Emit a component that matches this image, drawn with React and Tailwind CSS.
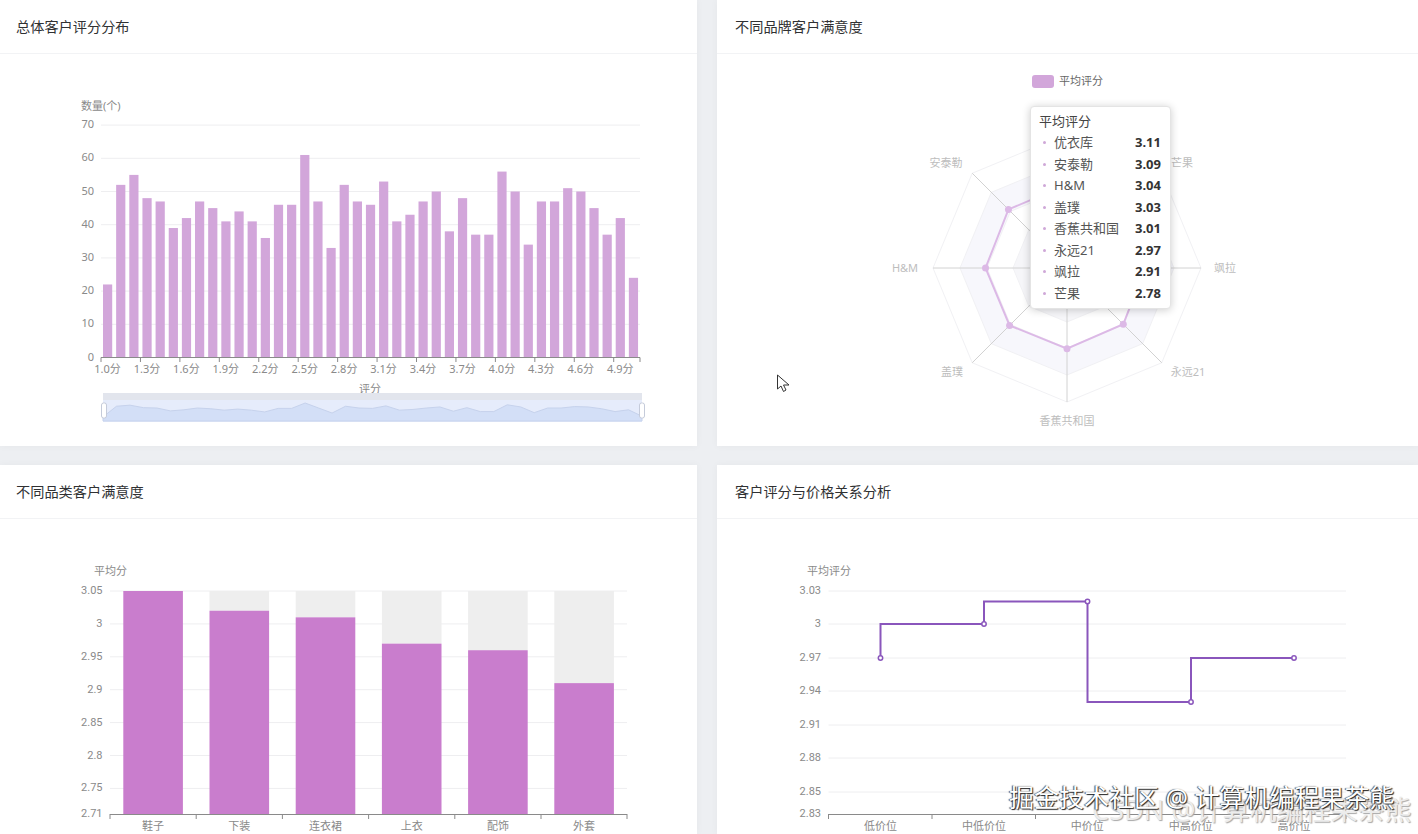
import React from "react";

const scores = [22, 52, 55, 48, 47, 39, 42, 47, 45, 41, 44, 41, 36, 46, 46, 61, 47, 33, 52, 47, 46, 53, 41, 43, 47, 50, 38, 48, 37, 37, 56, 50, 34, 47, 47, 51, 50, 45, 37, 42, 24];
const scoreLabels = ["1.0分", "1.3分", "1.6分", "1.9分", "2.2分", "2.5分", "2.8分", "3.1分", "3.4分", "3.7分", "4.0分", "4.3分", "4.6分", "4.9分"];

const brands = [
  { name: "优衣库", value: 3.11, label: null },
  { name: "安泰勒", value: 3.09, label: [946, 163] },
  { name: "H&M", value: 3.04, label: [905, 268] },
  { name: "盖璞", value: 3.03, label: [952, 372] },
  { name: "香蕉共和国", value: 3.01, label: [1067, 421] },
  { name: "永远21", value: 2.97, label: [1188, 372] },
  { name: "飒拉", value: 2.91, label: [1225, 268] },
  { name: "芒果", value: 2.78, label: [1182, 163] },
];

const categories = [
  { name: "鞋子", value: 3.05 },
  { name: "下装", value: 3.02 },
  { name: "连衣裙", value: 3.01 },
  { name: "上衣", value: 2.97 },
  { name: "配饰", value: 2.96 },
  { name: "外套", value: 2.91 },
];

const priceTicks = [
  ["3.03", 591],
  ["3", 624],
  ["2.97", 658],
  ["2.94", 691],
  ["2.91", 725],
  ["2.88", 758],
  ["2.85", 792],
  ["2.83", 814],
];
const pricePoints = [[880.5, 658], [984, 624], [1087.5, 601.5], [1191, 702], [1294, 658]];
const priceLabels = ["低价位", "中低价位", "中价位", "中高价位", "高价位"];

const LABEL = "#8a8a8a";

const Card = ({ title, titleClass, children }) => (
  <div className="relative bg-white shadow-[0_0_8px_rgba(0,0,0,0.04)]">
    <div className={`h-[54px] flex items-center border-b border-[#f2f3f5] text-[14.2px] text-[#303133] ${titleClass}`}>
      {title}
    </div>
    {children}
  </div>
);

const DistributionChart = () => {
  const y = (v) => 357.5 - v * 3.32;
  const band = 539 / 41;
  return (
    <svg viewBox="0 54 697 392" className="block w-full h-[392px]" fontSize="11" fill={LABEL}>
      <text x="81" y="110">数量(个)</text>
      {[0, 10, 20, 30, 40, 50, 60, 70].map((t) => (
        <g key={t}>
          {t > 0 && <line x1="101" x2="640" y1={y(t)} y2={y(t)} stroke="#eeeef0" />}
          <text x="94" y={y(t) + 3} textAnchor="end">{t}</text>
        </g>
      ))}
      {scores.map((s, i) => (
        <rect key={i} x={101 + band * i + 2} y={y(s)} width="9.2" height={s * 3.32} fill="#d2a6da" />
      ))}
      <line x1="101" x2="640" y1="357.5" y2="357.5" stroke="#8a8a8a" />
      {scoreLabels.map((l, i) => (
        <g key={l}>
          <line x1={101 + band * 3 * i} x2={101 + band * 3 * i} y1="357.5" y2="362" stroke="#8a8a8a" />
          <text x={107.5 + band * 3 * i} y="373" textAnchor="middle">{l}</text>
        </g>
      ))}
      <line x1="640" x2="640" y1="357.5" y2="362" stroke="#8a8a8a" />
      <text x="370" y="393" textAnchor="middle">评分</text>
      <rect x="103" y="393" width="539" height="29" fill="#e6ecfb" />
      <rect x="103" y="393" width="539" height="7" fill="#e2e5ed" />
      <path
        d={`M103 421 L103 417 ${scores.map((s, i) => `L${103 + (i * 539) / 40} ${424.8 - s * 0.357}`).join(" ")} L642 421 Z`}
        fill="#d3dff7"
        stroke="#c6d2ec"
      />
      <rect x="101.5" y="403" width="5" height="15" rx="2" fill="#fff" stroke="#c5cbda" />
      <rect x="639.5" y="403" width="5" height="15" rx="2" fill="#fff" stroke="#c5cbda" />
    </svg>
  );
};

const ring = (r) =>
  brands
    .map((_, i) => {
      const a = (i * Math.PI) / 4;
      return `${1067 - r * Math.sin(a)},${268 - r * Math.cos(a)}`;
    })
    .join(" ");

const RadarChart = () => {
  const points = brands.map((b, i) => {
    const a = (i * Math.PI) / 4;
    const r = (b.value / 5) * 134;
    return [1067 - r * Math.sin(a), 268 - r * Math.cos(a)];
  });
  return (
    <svg viewBox="717 54 701 392" className="block w-full h-[392px]" fontSize="11" fill="#bdbdbd">
      <rect x="1032" y="75" width="22" height="13" rx="3" fill="#d2a6da" />
      <text x="1059" y="85" fill="#666">平均评分</text>
      <polygon points={ring(107)} fill="#f7f7fc" />
      <polygon points={ring(80)} fill="#fff" />
      <polygon points={ring(54)} fill="#f6f6f9" />
      <polygon points={ring(27)} fill="#fff" />
      {[134, 107, 80, 54, 27].map((r) => (
        <polygon key={r} points={ring(r)} fill="none" stroke="#f1f1f4" />
      ))}
      {brands.map((_, i) => {
        const a = (i * Math.PI) / 4;
        return <line key={i} x1="1067" y1="268" x2={1067 - 134 * Math.sin(a)} y2={268 - 134 * Math.cos(a)} stroke="#d2d2d2" />;
      })}
      <polygon points={points.map((p) => p.join(",")).join(" ")} fill="none" stroke="#dcb9e6" strokeWidth="2" />
      {points.map((p, i) => (
        <circle key={i} cx={p[0]} cy={p[1]} r="3.5" fill="#dcb9e6" />
      ))}
      {brands.filter((b) => b.label).map((b) => (
        <text key={b.name} x={b.label[0]} y={b.label[1] + 4} textAnchor="middle">{b.name}</text>
      ))}
      {/* mouse cursor */}
      <path d="M777.5 375 L777.5 389 L781 386 L783.5 391.5 L786 390 L783.5 385 L789 385 Z" fill="#fff" stroke="#333" strokeWidth="1" />
    </svg>
  );
};

const RadarTooltip = () => (
  <div className="absolute left-[313px] top-[106px] w-[141px] h-[203px] bg-white rounded border border-[#e4e4e4] shadow-[0_1px_8px_rgba(0,0,0,0.2)] pl-2 pr-[9px] pt-1 text-[13px] text-[#555]">
    <div className="h-[21px] leading-[21px] text-[#444]">平均评分</div>
    {brands.map((b) => (
      <div key={b.name} className="flex items-center h-[21.5px]">
        <span className="w-[3px] h-[3px] ml-1 mr-2 rounded-full bg-[#cfa8d8]" />
        <span>{b.name}</span>
        <span className="ml-auto font-bold text-[#333]">{b.value.toFixed(2)}</span>
      </div>
    ))}
  </div>
);

const CategoryChart = () => {
  const y = (v) => 591 + ((3.05 - v) / 0.05) * 32.9;
  const band = 517.2 / 6;
  return (
    <svg viewBox="0 519 697 315" className="block w-full h-[315px]" fontSize="11" fill={LABEL}>
      <text x="94" y="575">平均分</text>
      {["3.05", "3", "2.95", "2.9", "2.85", "2.8", "2.75"].map((t) => (
        <g key={t}>
          <line x1="110" x2="627" y1={y(+t)} y2={y(+t)} stroke="#eeeef0" />
          <text x="102.5" y={y(+t) + 3} textAnchor="end" className="font-['Roboto']">{t}</text>
        </g>
      ))}
      <text x="102.5" y="817" textAnchor="end" className="font-['Roboto']">2.71</text>
      {categories.map((c, i) => {
        const x = 110 + band * i + 13.3;
        return (
          <g key={c.name}>
            <rect x={x} y="591" width="59.6" height={y(c.value) - 591} fill="#eeeeee" />
            <rect x={x} y={y(c.value)} width="59.6" height={814 - y(c.value)} fill="#c97dcd" />
            <line x1={110 + band * i} x2={110 + band * i} y1="814" y2="819" stroke="#8a8a8a" />
            <text x={110 + band * (i + 0.5)} y="830" textAnchor="middle">{c.name}</text>
          </g>
        );
      })}
      <line x1="110" x2="627" y1="814.5" y2="814.5" stroke="#8a8a8a" />
      <line x1="627" x2="627" y1="814" y2="819" stroke="#8a8a8a" />
    </svg>
  );
};

const PriceChart = () => {
  const step = pricePoints
    .map((p, i) => (i === 0 ? `M${p[0]} ${p[1]}` : `V${p[1]} H${p[0]}`))
    .join(" ");
  return (
    <svg viewBox="717 519 701 315" className="block w-full h-[315px]" fontSize="11" fill={LABEL}>
      <text x="829" y="575" textAnchor="middle">平均评分</text>
      {priceTicks.map(([t, py], i) => (
        <g key={t}>
          {i < priceTicks.length - 1 && <line x1="828.5" x2="1346" y1={py} y2={py} stroke="#eeeef0" />}
          <text x="821" y={py + 3} textAnchor="end" className="font-['Roboto']">{t}</text>
        </g>
      ))}
      <line x1="828.5" x2="1346" y1="814.5" y2="814.5" stroke="#8a8a8a" />
      {[0, 1, 2, 3, 4, 5].map((i) => (
        <line key={i} x1={828.5 + 103.5 * i} x2={828.5 + 103.5 * i} y1="814" y2="819" stroke="#8a8a8a" />
      ))}
      {priceLabels.map((l, i) => (
        <text key={l} x={880.5 + 103.4 * i} y="830" textAnchor="middle">{l}</text>
      ))}
      <path d={step} fill="none" stroke="#8a56bc" strokeWidth="2" />
      {pricePoints.map((p, i) => (
        <circle key={i} cx={p[0]} cy={p[1]} r="2.2" fill="#fff" stroke="#8a56bc" strokeWidth="1.5" />
      ))}
    </svg>
  );
};

export default function App() {
  return (
    <div className="relative w-[1418px] h-[834px] overflow-hidden bg-[#edeff2] font-['Noto_Sans','Noto_Sans_CJK_SC',sans-serif]">
      <div className="grid grid-cols-[697px_701px] grid-rows-[446px_369px] gap-x-5 gap-y-[19px]">
        <Card title="总体客户评分分布" titleClass="pl-4">
          <DistributionChart />
        </Card>
        <Card title="不同品牌客户满意度" titleClass="pl-[18px]">
          <RadarChart />
          <RadarTooltip />
        </Card>
        <Card title="不同品类客户满意度" titleClass="pl-4">
          <CategoryChart />
        </Card>
        <Card title="客户评分与价格关系分析" titleClass="pl-[18px]">
          <PriceChart />
        </Card>
      </div>
      <div className="absolute left-[1092px] top-[792px] text-[27px] leading-9 whitespace-nowrap text-[#ececec] [text-shadow:1px_1px_1px_#a8a8a8]">
        CSDN @计算机编程果茶熊
      </div>
      <div className="absolute left-[1009px] top-[779px] text-[25px] leading-9 whitespace-nowrap text-white [text-shadow:1px_1px_1px_#222,-1px_0_1px_#444]">
        掘金技术社区 @ 计算机编程果茶熊
      </div>
    </div>
  );
}
